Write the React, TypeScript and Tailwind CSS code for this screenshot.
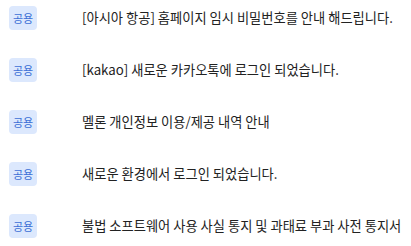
import React from "react";

const items = [
  "[아시아 항공] 홈페이지 임시 비밀번호를 안내 해드립니다.",
  "[kakao] 새로운 카카오톡에 로그인 되었습니다.",
  "멜론 개인정보 이용/제공 내역 안내",
  "새로운 환경에서 로그인 되었습니다.",
  "불법 소프트웨어 사용 사실 통지 및 과태료 부과 사전 통지서",
];

export default function App() {
  return (
    <div
      className="w-[411px] h-[246px] bg-white overflow-hidden flex flex-col gap-[28px] pt-[6px] pl-[9px]"
      style={{ fontFamily: '"Noto Sans CJK KR", "Noto Sans", sans-serif' }}
    >
      {items.map((t) => (
        <div key={t} className="flex items-center h-[24px]">
          <span className="w-[28px] h-[24px] rounded-[4px] bg-[#dce8fd] text-[#3b6fd6] text-[11px] flex items-center justify-center shrink-0">
            공용
          </span>
          <span className="ml-[45px] text-[13.25px] text-[#222] whitespace-nowrap">{t}</span>
        </div>
      ))}
    </div>
  );
}
